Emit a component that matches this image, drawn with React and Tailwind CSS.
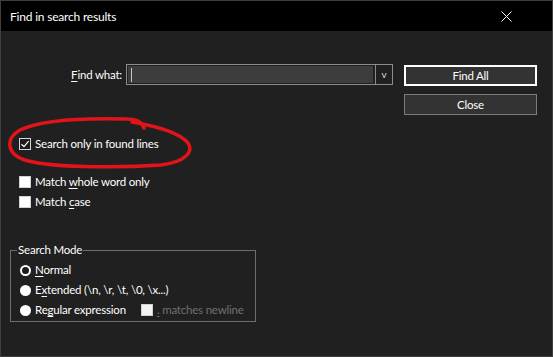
import React from "react";

const Box = ({ checked, disabled }) =>
  checked ? (
    <span className="w-[12px] h-[12px] shrink-0 border border-[#d8d8d8] bg-[#1c1c1c] flex items-center justify-center">
      <svg width="10" height="10" viewBox="0 0 10 10">
        <path d="M1.5 5.2 L4 7.6 L8.6 2.2" fill="none" stroke="#ffffff" strokeWidth="1.2" />
      </svg>
    </span>
  ) : (
    <span
      className={`w-[12px] h-[12px] shrink-0 border ${
        disabled ? "border-[#cfcfcf] bg-[#f4f4f4]" : "border-[#d0d0d0] bg-white"
      }`}
    />
  );

const CheckRow = ({ checked, children }) => (
  <div className="h-[20px] flex items-center pl-[18px] whitespace-nowrap">
    <Box checked={checked} />
    <span className="ml-[4px]">{children}</span>
  </div>
);

const Radio = ({ selected, children }) => (
  <div className="h-[20px] flex items-center pl-[9px] whitespace-nowrap">
    {selected ? (
      <span className="w-[11px] h-[11px] shrink-0 rounded-full border-[2px] border-white bg-[#1c1c1c]" />
    ) : (
      <span className="w-[11px] h-[11px] shrink-0 rounded-full bg-white" />
    )}
    <span className="ml-[4px]">{children}</span>
  </div>
);

export default function App() {
  return (
    <div className="relative w-[553px] h-[357px] border border-[#3f3f3f] flex flex-col text-[11.5px] tracking-[-0.2px] text-white font-['Lato',sans-serif] overflow-hidden whitespace-nowrap">
      {/* title bar */}
      <div className="h-[30px] bg-black flex items-center justify-between pl-[9px] pr-[40px]">
        <span className="text-[12px] pt-[1px]">Find in search results</span>
        <svg width="11" height="11" viewBox="0 0 11 11">
          <path d="M0.5 0.5 L10.5 10.5 M10.5 0.5 L0.5 10.5" stroke="#ffffff" strokeWidth="1" />
        </svg>
      </div>

      {/* body */}
      <div className="flex-1 bg-[#202020]">
        <div className="mt-[33px] flex items-start">
          <div className="w-[121px] h-[21px] leading-[21px] text-right">
            <span className="underline underline-offset-2">F</span>ind what:
          </div>
          <div className="ml-[4px] w-[267px] h-[21px] border border-[#8c8c8c] flex">
            <div className="m-[1px] mr-[2px] flex-1 bg-[#3d3d3d] flex items-center pl-[3px]">
              <span className="w-[1px] h-[14px] bg-[#c8c8c8]" />
            </div>
            <div className="w-[1px] bg-[#8c8c8c]" />
            <div className="w-[16px] flex items-center justify-center text-[10px] text-[#d8d8e8] pb-[1px]">
              v
            </div>
          </div>
          <div className="ml-[11px] mt-[1px] w-[133px] flex flex-col">
            <button className="h-[21px] border-2 border-white bg-[#333333] text-white">
              Find All
            </button>
            <button className="mt-[8px] h-[21px] border border-[#7c7c7c] bg-[#333333] text-white">
              Close
            </button>
          </div>
        </div>

        <div className="mt-[19px]">
          <CheckRow checked>Search only in found lines</CheckRow>
        </div>
        <div className="mt-[18px]">
          <CheckRow>
            Match <span className="underline underline-offset-2">w</span>hole word only
          </CheckRow>
          <CheckRow>
            Match <span className="underline underline-offset-2">c</span>ase
          </CheckRow>
        </div>

        <fieldset className="mt-[30px] ml-[9px] w-[246px] min-w-0 h-[80px] border border-[#6e6e6e] px-0 pb-0">
          <legend className="ml-[6px] px-[1px] leading-[16px]">Search Mode</legend>
          <div className="pt-[2px]">
            <Radio selected>
              <span className="underline underline-offset-2">N</span>ormal
            </Radio>
            <Radio>
              E<span className="underline underline-offset-2">x</span>tended (\n, \r, \t, \0, \x...)
            </Radio>
            <div className="h-[20px] flex items-center">
              <Radio>
                Re<span className="underline underline-offset-2">g</span>ular expression
              </Radio>
              <div className="ml-[15px] flex items-center text-[#707070]">
                <Box disabled />
                <span className="ml-[4px]">
                  <span className="underline underline-offset-2">.</span> matches newline
                </span>
              </div>
            </div>
          </div>
        </fieldset>
      </div>

      {/* red marker annotation */}
      <svg
        className="absolute left-0 top-0 pointer-events-none"
        width="553"
        height="357"
        viewBox="0 0 553 357"
      >
        <path
          d="M143 127 C141 121 136 118 126 118 C92 117 42 118 19 129 C5 137 5 151 21 158 C44 167 118 167 160 164 C184 161 193 151 187 142 C179 132 160 126 131 121"
          fill="none"
          stroke="#e2141a"
          strokeWidth="3.5"
          strokeLinecap="round"
        />
      </svg>
    </div>
  );
}
